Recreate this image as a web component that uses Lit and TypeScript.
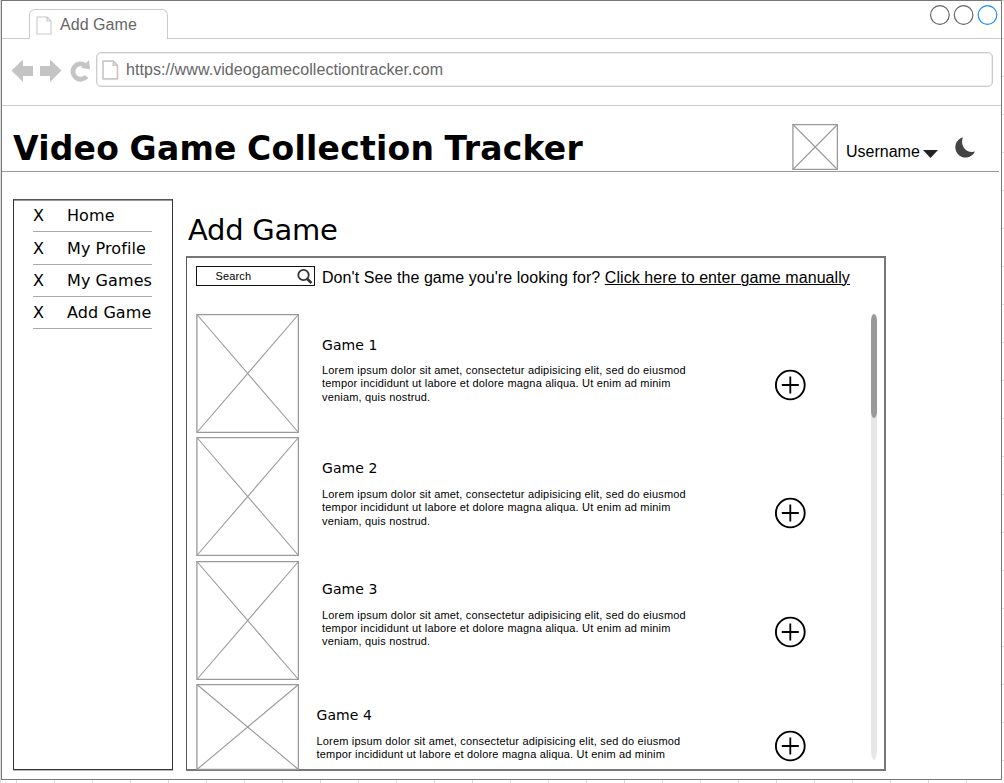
import { LitElement, html, css } from "lit";
import { customElement, property } from "lit/decorators.js";

const LOREM_LINES = [
  "Lorem ipsum dolor sit amet, consectetur adipisicing elit, sed do eiusmod",
  "tempor incididunt ut labore et dolore magna aliqua. Ut enim ad minim",
  "veniam, quis nostrud.",
];

@customElement("image-placeholder")
class ImagePlaceholder extends LitElement {
  @property({ type: Number }) w = 103;
  @property({ type: Number }) h = 119;
  static styles = css`
    :host { display: block; line-height: 0; }
  `;
  render() {
    const { w, h } = this;
    return html`<svg width=${w} height=${h} viewBox="0 0 ${w} ${h}" fill="none" stroke="#9a9a9a">
      <rect x="0.9" y="0.6" width=${w - 1.5} height=${h - 1.2} stroke-width="1.3"></rect>
      <path d="M.9 .5L${w - 0.5} ${h - 0.5}M${w - 0.5} .5L.9 ${h - 0.5}" stroke-width="1.1"></path>
    </svg>`;
  }
}

@customElement("browser-chrome")
class BrowserChrome extends LitElement {
  static styles = css`
    :host { display: block; font: 16px "Liberation Sans", Arial, sans-serif; color: #666; }
    svg { display: block; }
    .tabs { display: flex; height: 37px; border-bottom: 1px solid #ccc; justify-content: space-between; }
    .tab { box-sizing: border-box; margin: 8px 0 -1px 27px; width: 139px; border: 1.5px solid #ccc; border-bottom: 0;
      border-radius: 6px 6px 0 0; background: #fff; display: flex; padding: 6px 0 0 6px; gap: 8px; }
    .tab span { line-height: 18px; letter-spacing: 0.05px; }
    .circles { margin: 3px 1px 0 0; }
    .bar { display: flex; height: 67px; border-bottom: 1px solid #ccc; box-sizing: border-box; padding: 13px 8px 0 9px; }
    .nav { margin: 6px 5px 0 0; }
    .url { box-sizing: border-box; flex: 1; height: 35px; border: 1px solid #ccc; border-radius: 5px; display: flex;
      align-items: center; padding-left: 5px; gap: 7.500px; box-shadow: inset 0 0 0 0.5px #ddd; letter-spacing: 0.075px; }
  `;
  page(w: number, h: number, sw: number) {
    return html`<svg width=${w} height=${h} viewBox="0 0 16 19" preserveAspectRatio="none" fill="none" stroke="#c8c8c8" stroke-width=${sw}>
      <path d="M1 1H11L15 5V18H1ZM11 1V5H15"></path></svg>`;
  }
  render() {
    return html`
      <div class="tabs">
        <div class="tab">${this.page(16, 19, 1.1)}<span>Add Game</span></div>
        <svg class="circles" width="70" height="24" fill="none" stroke-width="1.2">
          <circle cx="9.9" cy="11" r="9.3" stroke="#666"></circle>
          <circle cx="33.6" cy="11" r="9.3" stroke="#666"></circle>
          <circle cx="57.5" cy="11" r="9.3" stroke="#1a8cff"></circle>
        </svg>
      </div>
      <div class="bar">
        <svg class="nav" width="80" height="24" viewBox="0 0 80 24" fill="#c4c4c4">
          <path d="M.5 12.5L12 1.5V8H22V18H12V24Z"></path>
          <path d="M50.500 12.500L39 1.500V8H29V18H39V24Z"></path>
          <path d="M75.500 18.500A7.700 7.700 0 1 1 74 7.200" fill="none" stroke="#c4c4c4" stroke-width="4.800"></path>
          <path d="M78 2L79 11.300L70 10Z"></path>
        </svg>
        <div class="url">${this.page(16.5, 20, 1.6)}<span>https://www.videogamecollectiontracker.com</span></div>
      </div>`;
  }
}

@customElement("side-nav")
class SideNav extends LitElement {
  static styles = css`
    :host { display: block; box-sizing: border-box; width: 160px; height: 571px; border: 1px solid #333; border-top-color: #555;
      box-shadow: inset 0 1px #999, 0 1px #bbb; padding: 0 20px 0 19px; font: 16px "DejaVu Sans", Verdana, sans-serif; color: #000; }
    .item { display: grid; grid-template-columns: 34px auto; box-sizing: border-box; height: 32.300px; line-height: 31px;
      border-bottom: 1px solid #aaa; white-space: nowrap; letter-spacing: 0.08px; }
    .item:nth-child(2) { line-height: 33px; }
  `;
  render() {
    return html`${["Home", "My Profile", "My Games", "Add Game"].map(
      (t) => html`<div class="item"><span>X</span><span>${t}</span></div>`
    )}`;
  }
}

@customElement("game-panel")
class GamePanel extends LitElement {
  static styles = css`
    :host { display: block; box-sizing: border-box; width: 700px; height: 515px; border: 1.5px solid #555; border-right: 2px solid #777;
      border-top: 2px solid #777; border-bottom: 2px solid #777; padding: 8px 7px 0 9px; font-family: "Liberation Sans", Arial, sans-serif; color: #000; }
    .top { display: flex; height: 48px; align-items: flex-start; gap: 7px; }
    .search { box-sizing: border-box; width: 119px; height: 20px; border: 1px solid #111; display: flex; align-items: center;
      justify-content: space-between; padding: 0 1px 0 18.500px; font-size: 11px; letter-spacing: 0.15px; }
    .hint { font-size: 16px; line-height: 24px; white-space: nowrap; letter-spacing: 0.07px; }
    .hint u { text-underline-offset: 1px; text-decoration-thickness: 1px; }
    .body { display: flex; justify-content: space-between; }
    .row { display: grid; grid-template-columns: 126px 452px 32px; height: 123.400px; }
    .row:nth-child(4) { height: 86px; }
    .text { padding-top: 22px; }
    .row:nth-child(3) .text { padding-top: 19px; }
    .row:nth-child(3) .name { margin-bottom: 11px; }
    .row:nth-child(4) .text { margin-left: -5.500px; }
    .name { font: 14px/18px "DejaVu Sans", Verdana, sans-serif; margin-bottom: 10px; letter-spacing: 0.08px; }
    .row:nth-child(2) .name { margin-bottom: 10.600px; }
    .row:nth-child(4) .name { margin-bottom: 10.900px; }
    .lorem { font-size: 11px; line-height: 13.300px; letter-spacing: 0.18px; white-space: nowrap; }
    .plus { margin-top: 55px; }
    .row:nth-child(2) .plus { margin-top: 60px; }
    .row:nth-child(4) .plus { margin-top: 46px; }
    .track { width: 6px; height: 446px; background: #e6e6e6; border-radius: 3px / 12px; }
    .thumb { height: 104px; background: #999; border-radius: 3px / 7px; }
    svg { display: block; }
  `;
  render() {
    return html`
      <div class="top">
        <div class="search"><span>Search</span>
          <svg width="16" height="16" fill="none" stroke="#333"><circle cx="6.500" cy="7" r="5.200" stroke-width="1.800"></circle>
            <path d="M10.300 11L14.500 15" stroke-width="2.600"></path></svg>
        </div>
        <div class="hint">Don't See the game you're looking for? <u>Click here to enter game manually</u></div>
      </div>
      <div class="body">
        <div>
          ${[1, 2, 3, 4].map(
            (n) => html`<div class="row">
              <image-placeholder w="103" h=${n === 4 ? 86 : 119}></image-placeholder>
              <div class="text">
                <div class="name">Game ${n}</div>
                <div class="lorem">${LOREM_LINES.slice(0, n === 4 ? 2 : 3).map((l) => html`<div>${l}</div>`)}</div>
              </div>
              <svg class="plus" width="32" height="32" fill="none" stroke="#000">
                <circle cx="16.3" cy="16" r="14.400" stroke-width="1.900"></circle>
                <path d="M7.800 16H24.800M16.300 7.500V24.500" stroke-width="1.800"></path></svg>
            </div>`
          )}
        </div>
        <div class="track"><div class="thumb"></div></div>
      </div>`;
  }
}

@customElement("app-root")
class AppRoot extends LitElement {
  static styles = css`
    :host { display: block; box-sizing: border-box; width: 1004px; height: 783px; padding: 0 2px 3px 1px; overflow: hidden;
      background: repeating-linear-gradient(90deg, #ddd 0 1px, transparent 1px 38px) 16px 0,
        repeating-linear-gradient(#ddd 0 1px, transparent 1px 38px), #fff; }
    .window { box-sizing: border-box; width: 1001px; height: 780px; border: 1px solid #777; background: #fff; }
    .head { display: flex; align-items: flex-start; height: 66px; box-sizing: border-box; margin-right: 2px; border-bottom: 1px solid #999; padding-left: 11px; }
    h1 { margin: 23px 0 0; width: 779px; font: bold 33px/40px "DejaVu Sans", Verdana, sans-serif; letter-spacing: 0.24px;
      word-spacing: -1.300px; color: #000; white-space: nowrap; }
    .avatar { margin-top: 18px; }
    .user { display: flex; align-items: center; margin: 37px 0 0 8px; font: 16px/18px "Liberation Sans", Arial, sans-serif; gap: 3px; color: #000; }
    .user svg { margin-top: 3px; }
    .moon { margin: 31px 0 0 16px; }
    .content { display: flex; align-items: flex-start; padding: 27px 0 0 11px; gap: 13px; }
    h2 { margin: 12px 0 7px 2px; font: 29px/38px "DejaVu Sans", Verdana, sans-serif; letter-spacing: -0.28px; color: #000; }
  `;
  render() {
    return html`<div class="window">
      <browser-chrome></browser-chrome>
      <div class="head">
        <h1>Video Game Collection Tracker</h1>
        <image-placeholder class="avatar" w="46" h="46"></image-placeholder>
        <div class="user">Username<svg width="15" height="8"><path d="M0 0H15L7.500 8Z" fill="#222"></path></svg></div>
        <svg class="moon" width="22" height="22"><path d="M9 .3A10.300 10.300 0 1 0 21 14.500C12.500 17 5.500 8.500 9 .3Z" fill="#444"></path></svg>
      </div>
      <div class="content">
        <side-nav></side-nav>
        <div><h2>Add Game</h2><game-panel></game-panel></div>
      </div>
    </div>`;
  }
}
